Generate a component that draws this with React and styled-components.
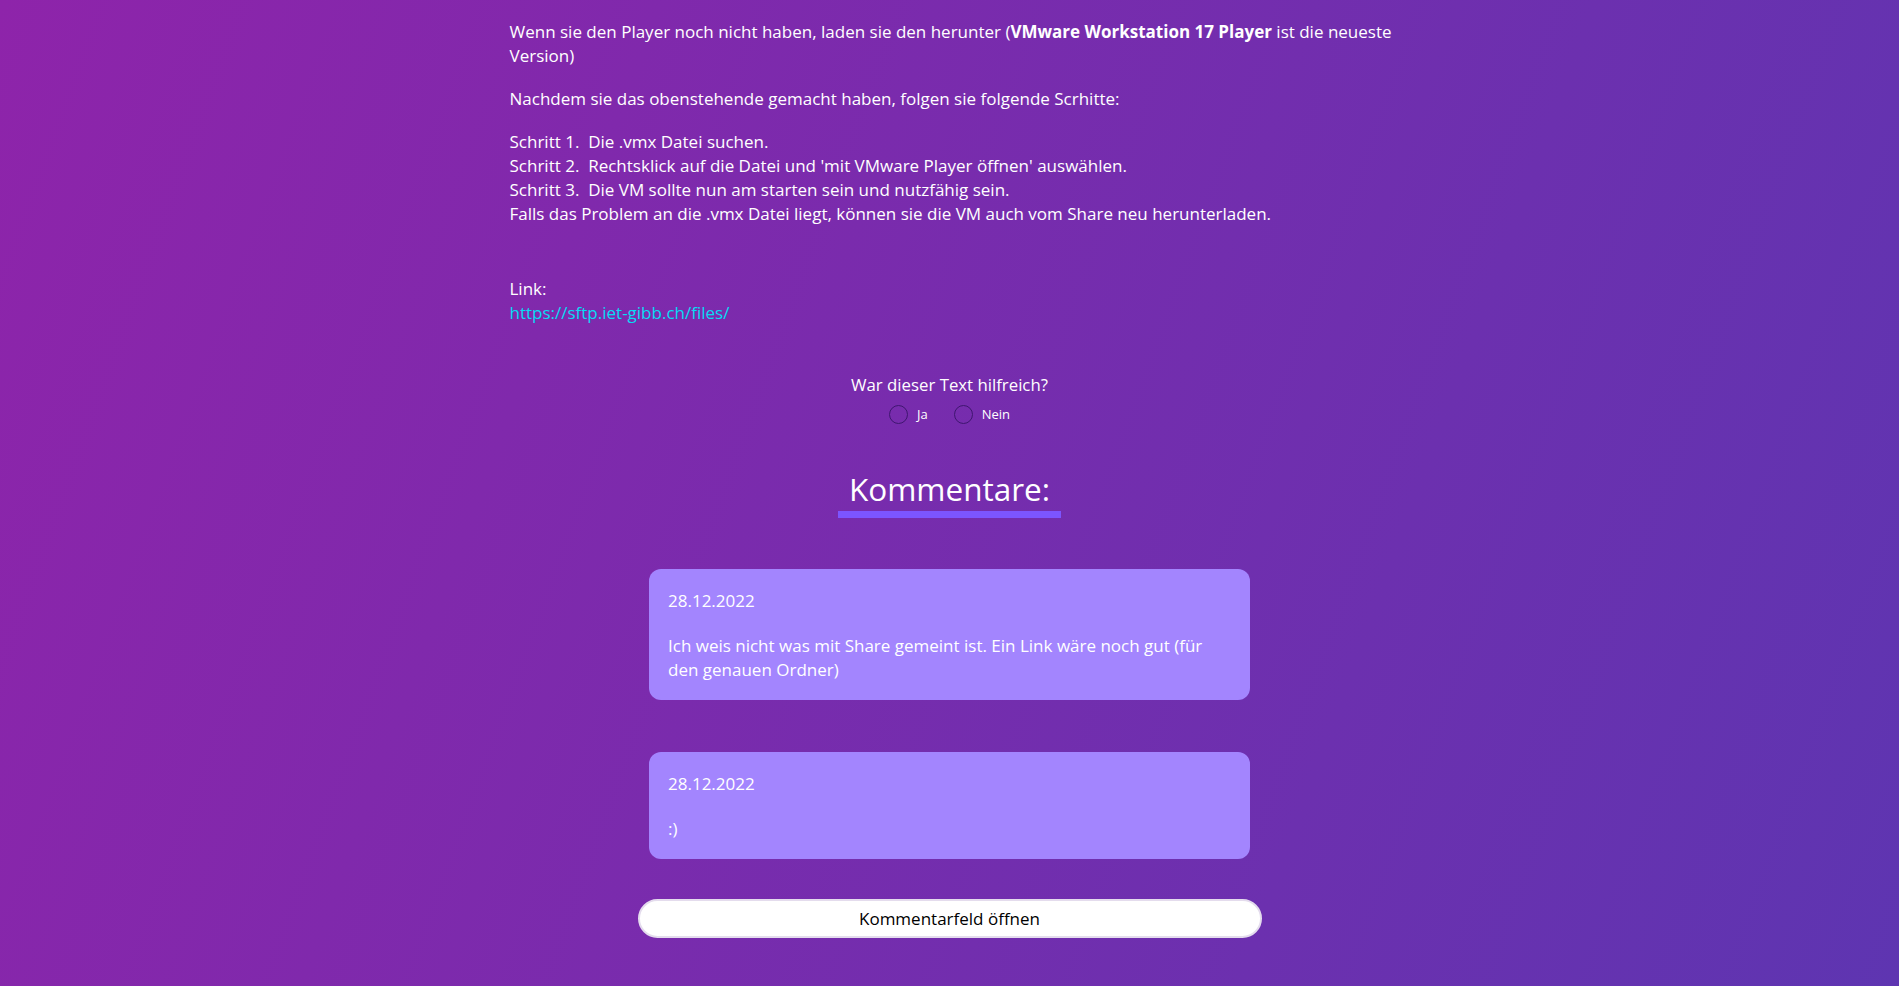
import React, { useState } from 'react';
import styled, { createGlobalStyle } from 'styled-components';

const GlobalStyle = createGlobalStyle`
  html, body {
    margin: 0;
    padding: 0;
  }
  body {
    min-height: 100vh;
    background: linear-gradient(110deg, #8e24aa 0%, #5e35b1 100%);
    background-attachment: fixed;
    color: #fff;
    font-family: 'Segoe UI', 'Open Sans', 'Noto Sans', sans-serif;
  }
`;

const comments = [
  {
    date: '28.12.2022',
    text: 'Ich weis nicht was mit Share gemeint ist. Ein Link wäre noch gut (für den genauen Ordner)',
  },
  { date: '28.12.2022', text: ':)' },
];

const App = () => {
  const [helpful, setHelpful] = useState('');

  return (
    <>
      <GlobalStyle />
      <Page>
        <Article>
          <Paragraph>
            Wenn sie den Player noch nicht haben, laden sie den herunter (<b>VMware Workstation 17 Player</b> ist die
            neueste Version)
          </Paragraph>
          <Paragraph>Nachdem sie das obenstehende gemacht haben, folgen sie folgende Scrhitte:</Paragraph>
          <Paragraph>
            Schritt 1.&nbsp; Die .vmx Datei suchen.
            <br />
            Schritt 2.&nbsp; Rechtsklick auf die Datei und 'mit VMware Player öffnen' auswählen.
            <br />
            Schritt 3.&nbsp; Die VM sollte nun am starten sein und nutzfähig sein.
            <br />
            Falls das Problem an die .vmx Datei liegt, können sie die VM auch vom Share neu herunterladen.
          </Paragraph>
          <LinkBlock>
            Link:
            <br />
            <a href='#files'>https://sftp.iet-gibb.ch/files/</a>
          </LinkBlock>
        </Article>

        <Feedback>
          <Question>War dieser Text hilfreich?</Question>
          <RadioRow>
            {['Ja', 'Nein'].map((option) => (
              <RadioLabel key={option}>
                <Radio
                  type='radio'
                  name='helpful'
                  checked={helpful === option}
                  onChange={() => setHelpful(option)}
                />
                {option}
              </RadioLabel>
            ))}
          </RadioRow>
          <Heading>Kommentare:</Heading>
        </Feedback>

        <CommentList>
          {comments.map((comment, index) => (
            <CommentCard key={index}>
              <CommentDate>{comment.date}</CommentDate>
              <CommentText>{comment.text}</CommentText>
            </CommentCard>
          ))}
        </CommentList>

        <OpenButton type='button'>Kommentarfeld öffnen</OpenButton>
      </Page>
    </>
  );
};

export default App;

const Page = styled.main`
  padding: 20px 0 48px;
  font-size: 17px;
  line-height: 24px;
`;

const Article = styled.section`
  width: 900px;
  margin-left: calc(50% - 440px);
`;

const Paragraph = styled.p`
  margin: 0 0 19px;
  b {
    font-weight: 700;
  }
`;

const LinkBlock = styled.div`
  margin-top: 51px;
  a {
    color: #06dcf4;
    text-decoration: none;
  }
`;

const Feedback = styled.section`
  display: flex;
  flex-direction: column;
  align-items: center;
  margin-top: 48px;
`;

const Question = styled.div`
  font-size: 16.8px;
`;

const RadioRow = styled.div`
  display: flex;
  justify-content: center;
  gap: 26px;
  margin-top: 8px;
`;

const RadioLabel = styled.label`
  display: flex;
  align-items: center;
  gap: 9px;
  font-size: 13px;
  line-height: 19px;
  cursor: pointer;
`;

const Radio = styled.input`
  appearance: none;
  width: 19px;
  height: 19px;
  margin: 0;
  border: 1px solid #3f1670;
  border-radius: 50%;
  background: transparent;
  cursor: pointer;
  &:checked {
    background: radial-gradient(circle, #fff 0 4px, transparent 5px);
  }
`;

const Heading = styled.h2`
  margin: 43px 0 0;
  padding: 0 11px;
  font-size: 31.5px;
  font-weight: 400;
  line-height: 44px;
  border-bottom: 7px solid #7c55ff;
`;

const CommentList = styled.section`
  display: flex;
  flex-direction: column;
  gap: 52px;
  width: 601px;
  margin: 51px auto 0;
`;

const CommentCard = styled.article`
  background: #a385fe;
  border-radius: 12px;
  padding: 20px 19px 18px;
`;

const CommentDate = styled.div``;

const CommentText = styled.div`
  margin-top: 21px;
`;

const OpenButton = styled.button`
  display: block;
  width: 624px;
  height: 39px;
  margin: 40px auto 0;
  border: 2px solid #e4dced;
  border-radius: 20px;
  background: #fff;
  color: #000;
  font-family: inherit;
  font-size: 17px;
  cursor: pointer;
`;
